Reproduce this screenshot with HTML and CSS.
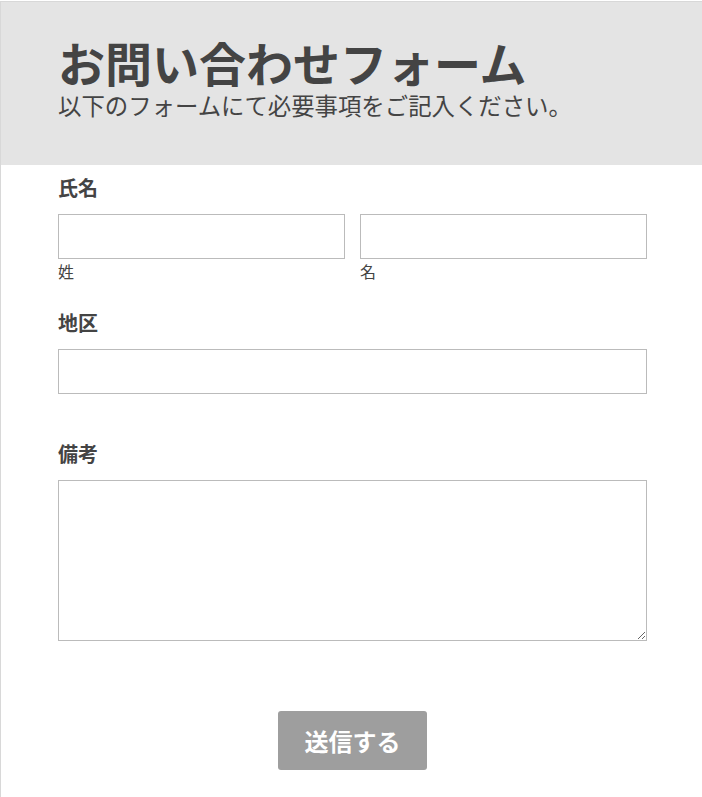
FILE: index.html
```html
<!DOCTYPE html>
<html lang="ja">
<head>
  <meta charset="UTF-8" />
  <meta name="viewport" content="width=device-width, initial-scale=1.0"/>
  <title>お問い合わせフォーム</title>
  <link rel="stylesheet" href="styles.css">
</head>
<body>

  <div class="contact-page">
    <header class="contact-header">
      <h1 class="contact-title">お問い合わせフォーム</h1>
      <p class="contact-lead">以下のフォームにて必要事項をご記入ください。</p>
    </header>

    <form class="contact-form">
      <div class="form-group form-group-name">
        <label class="form-label">氏名</label>
        <div class="name-row">
          <div class="name-field">
            <input type="text" class="form-input">
            <span class="sub-label">姓</span>
          </div>
          <div class="name-field">
            <input type="text" class="form-input">
            <span class="sub-label">名</span>
          </div>
        </div>
      </div>

      <div class="form-group">
        <label class="form-label">地区</label>
        <input type="text" class="form-input">
      </div>

      <div class="form-group form-group-last">
        <label class="form-label">備考</label>
        <textarea class="form-textarea"></textarea>
      </div>

      <div class="form-actions">
        <button type="button" class="submit-btn">送信する</button>
      </div>
    </form>
  </div>

</body>
</html>
```

FILE: styles.css
```css
body {
  font-family: "Noto Sans CJK JP", "Noto Sans", sans-serif;
  color: #444;
  background: #fff;
  margin: 0;
  padding: 0;
}

.contact-page {
  margin-top: 1px;
  border-top: 1px solid #d8d8d8;
  border-left: 1px solid #d8d8d8;
}

.contact-header {
  box-sizing: border-box;
  background: #e4e4e4;
  height: 163px;
  padding: 32px 57px 0;
}

.contact-title {
  font-size: 47px;
  font-weight: bold;
  line-height: 56px;
  margin: 0;
}

.contact-lead {
  font-size: 23.4px;
  line-height: 30px;
  margin: 0;
}

.contact-form {
  width: 589px;
  margin-left: 57px;
  padding: 8px 0 40px;
}

.form-group {
  margin-bottom: 45px;
}

.form-group-name {
  margin-bottom: 25px;
}

.form-group-last {
  margin-bottom: 0;
}

.form-label {
  display: block;
  font-size: 20px;
  font-weight: bold;
  line-height: 30px;
  margin-bottom: 11px;
}

.name-row {
  display: grid;
  grid-template-columns: 1fr 1fr;
  gap: 15px;
}

.form-input {
  display: block;
  box-sizing: border-box;
  width: 100%;
  height: 45px;
  border: 1px solid #bbb;
  font-size: 16px;
  padding: 6px 10px;
  margin: 0;
}

.sub-label {
  display: block;
  font-size: 16px;
  line-height: 24px;
}

.form-textarea {
  display: block;
  box-sizing: border-box;
  width: 100%;
  height: 161px;
  border: 1px solid #bbb;
  font-size: 16px;
  padding: 6px 10px;
  margin: 0;
}

.form-actions {
  text-align: center;
  padding-top: 70px;
}

.submit-btn {
  background: #9e9e9e;
  color: #fff;
  font-family: "Noto Sans CJK JP", sans-serif;
  font-size: 24px;
  font-weight: bold;
  width: 149px;
  height: 59px;
  border: none;
  border-radius: 3px;
  cursor: pointer;
}
```
